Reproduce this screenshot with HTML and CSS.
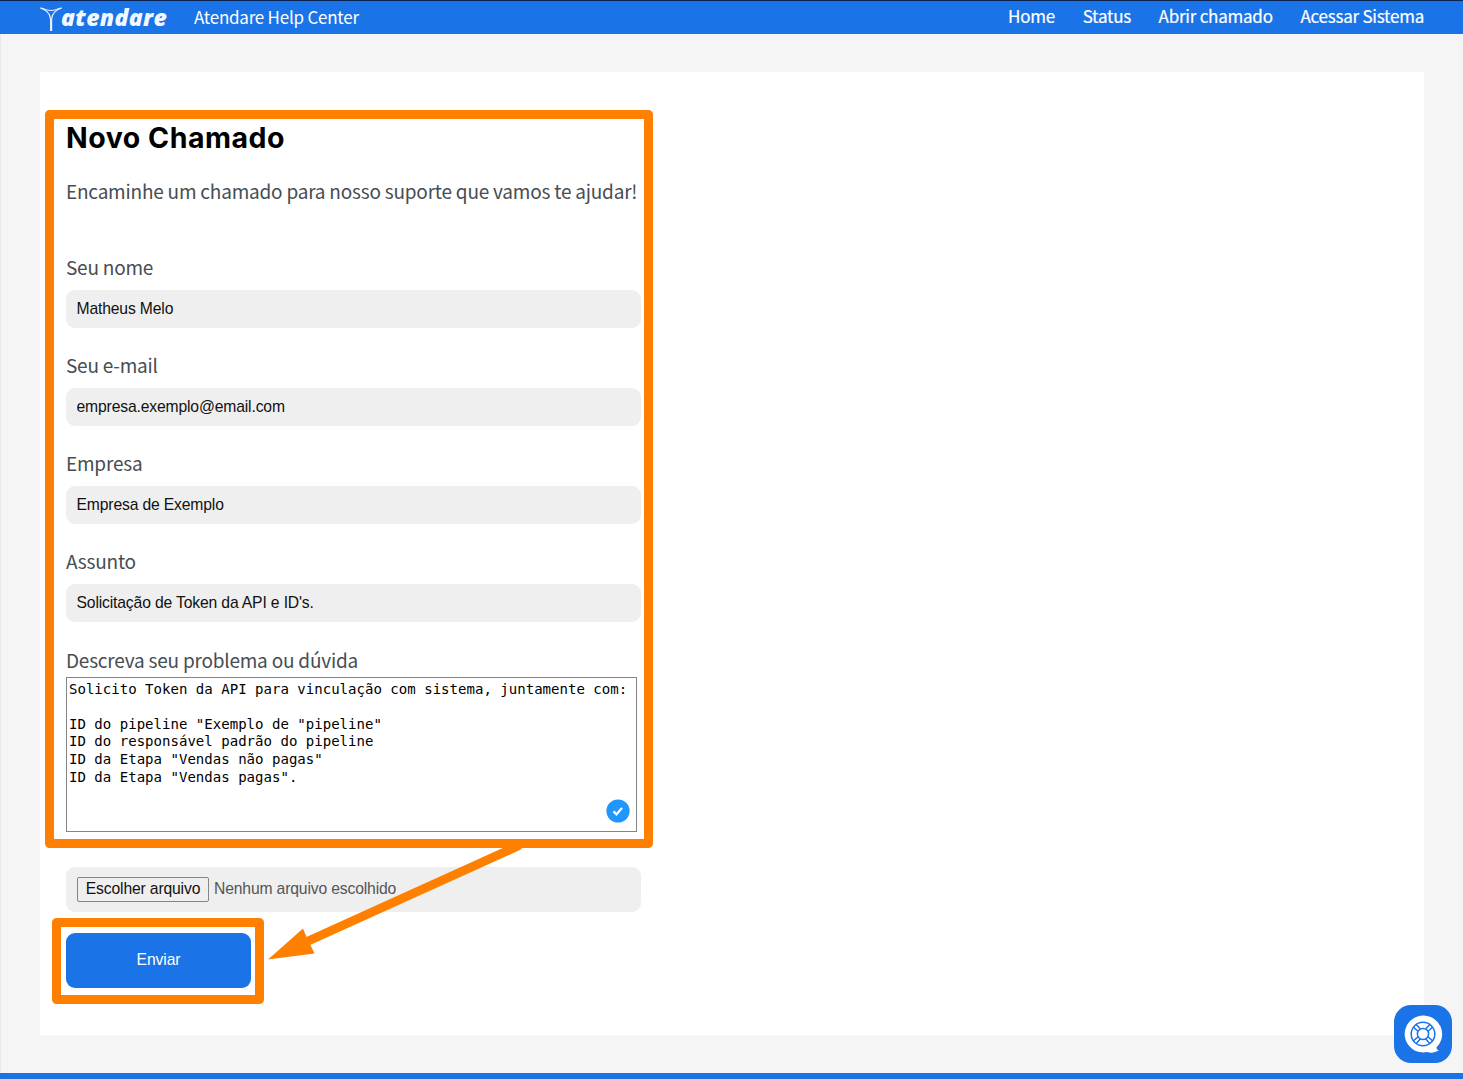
FILE: index.html
```html
<!DOCTYPE html>
<html lang="pt-BR">
<head>
<meta charset="utf-8">
<title>Novo Chamado - Atendare Help Center</title>
<link rel="stylesheet" href="styles.css">
</head>
<body>
<header class="topbar">
  <a class="brand">
    <svg class="brand-mark" width="22" height="25" viewBox="0 0 22 25" fill="none" stroke="#e4f0ff">
      <path d="M.5 1.2C5 2 10 6 10.600 12V24" stroke-width="1.200"/>
      <path d="M21.5 1.2C17 2 12 6 11.600 12V24" stroke-width="1.200"/>
      <path d="M.5 1c4 .3 5.500 2.500 10.500 2.500S17.500 1.300 21.500 1" stroke-width="1"/>
    </svg>
    <span class="brand-name">atendare</span>
  </a>
  <span class="site-name">Atendare Help Center</span>
  <nav class="menu">
    <a>Home</a><a>Status</a><a>Abrir chamado</a><a>Acessar Sistema</a>
  </nav>
</header>
<main class="panel">
  <form class="ticket">
    <h1 class="title">Novo Chamado</h1>
    <p class="intro">Encaminhe um chamado para nosso suporte que vamos te ajudar!</p>
    <div class="field"><label class="label">Seu nome</label><input class="input" value="Matheus Melo"></div>
    <div class="field"><label class="label">Seu e-mail</label><input class="input" value="empresa.exemplo@email.com"></div>
    <div class="field"><label class="label">Empresa</label><input class="input" value="Empresa de Exemplo"></div>
    <div class="field"><label class="label">Assunto</label><input class="input" value="Solicitação de Token da API e ID's."></div>
    <div class="message">
      <label class="label label-message">Descreva seu problema ou dúvida</label>
      <textarea class="textarea" spellcheck="false">Solicito Token da API para vinculação com sistema, juntamente com:

ID do pipeline "Exemplo de "pipeline"
ID do responsável padrão do pipeline
ID da Etapa "Vendas não pagas"
ID da Etapa "Vendas pagas".</textarea>
      <svg class="check" width="24" height="24" viewBox="0 0 24 24"><circle cx="12" cy="12" r="11.600" fill="#2196fd"/><path d="M7.500 12.400l3 3 5.500-6.500" fill="none" stroke="#fff" stroke-width="2.200"/></svg>
    </div>
    <div class="file"><button type="button" class="file-button">Escolher arquivo</button><span class="file-name">Nenhum arquivo escolhido</span></div>
    <button type="button" class="submit">Enviar</button>
  </form>
</main>
<footer class="footer"></footer>
<svg class="annotations" width="1463" height="1079" viewBox="0 0 1463 1079">
  <g fill="none" stroke="#ff8000" stroke-width="9" stroke-linejoin="round">
    <rect x="49.500" y="114.500" width="599" height="729"/>
    <rect x="56.500" y="922.500" width="203" height="77"/>
    <path d="M518 846L306 942" stroke-linecap="round"/>
  </g>
  <path d="M268 959.500L303 928.500L306.500 937L310.500 945L314.500 953.500Z" fill="#ff8000"/>
</svg>
<button type="button" class="help">
  <svg width="58" height="58" viewBox="0 0 58 58" fill="none">
    <path d="M29 10.500a18.500 18.500 0 1 0 4 36.600c4 1 8 .8 12-1.800-1.500-.3-2.500-1-2.500-3A18.500 18.500 0 0 0 29 10.500Z" fill="#fff"/>
    <g stroke="#1b73e8" stroke-width="1.500">
      <circle cx="29" cy="29" r="11.800"/><circle cx="29" cy="29" r="5.600"/>
      <path d="M26.300 24l-4.300-4.700M24 26.300l-4.700-4.300M31.700 24l4.300-4.700M34 26.300l4.700-4.300M26.300 34l-4.300 4.700M24 31.700l-4.700 4.300M31.700 34l4.300 4.700M34 31.700l4.700 4.300"/>
    </g>
  </svg>
</button>
</body>
</html>
```
FILE: styles.css
```css
* { box-sizing: border-box; }
body {
  margin: 0;
  height: 1079px;
  display: flex;
  flex-direction: column;
  background: #f5f5f5;
  box-shadow: inset 1px 0 #e9e9e9;
  font-family: "Noto Sans CJK JP", "Noto Sans", sans-serif;
  color: #474d53;
  overflow: hidden;
}
.topbar {
  flex: none;
  height: 34px;
  display: flex;
  align-items: center;
  padding: 0 39px 0 40px;
  background: #1b73e8;
  border-top: 1px solid #0b2350;
  color: #fff;
}
.brand { display: flex; width: 154px; height: 25px; margin-top: 4px; }
.brand-mark { flex: none; }
.brand-name {
  font: italic 800 23px/21px "Open Sans", sans-serif;
  letter-spacing: 0.350px;
  margin-left: -1px;
  color: #f2f8ff;
}
.site-name { font-size: 17px; letter-spacing: -0.240px; line-height: 24px; padding-bottom: 2px; }
.menu {
  margin-left: auto;
  padding-bottom: 3px;
  display: flex;
  gap: 27.700px;
  font-size: 17px;
  letter-spacing: -0.240px;
  line-height: 24px;
  -webkit-text-stroke: 0.2px #fff;
  white-space: nowrap;
}
.panel {
  flex: none;
  height: 963px;
  margin: 38px 39px 0 40px;
  padding: 47px 0 0 26px;
  background: #fff;
}
.ticket { width: 575px; display: flex; flex-direction: column; align-items: flex-start; }
.title {
  margin: 0;
  font: 700 28.500px/38px Inter, sans-serif;
  letter-spacing: 0.520px;
  color: #000;
}
.intro { margin: 16px 0 0; height: 71.500px; font-size: 19px; letter-spacing: -0.210px; line-height: 36px; white-space: nowrap; }
.field { width: 100%; height: 98.300px; }
.label { display: block; height: 45px; font-size: 19px; letter-spacing: -0.210px; line-height: 43px; }
.input {
  display: block;
  width: 100%;
  height: 38px;
  border: 0;
  border-radius: 9px;
  padding: 0 10.500px;
  background: #efefef;
  font: 15.700px "Liberation Sans", Arial, sans-serif;
  letter-spacing: -0.150px;
  color: #111;
}
.message { position: relative; width: 571px; height: 194px; }
.label-message { height: 39px; }
.textarea {
  display: block;
  width: 571px;
  height: 155px;
  padding: 3px 2px;
  border: 1px solid #858585;
  border-radius: 0;
  resize: none;
  background: #fff;
  font: 14.050px/17.600px "DejaVu Sans Mono", monospace;
  color: #000;
  overflow: hidden;
}
.check { position: absolute; right: 7.500px; bottom: 9px; }
.file {
  width: 100%;
  height: 45px;
  margin-top: 35px;
  padding: 0 11px;
  display: flex;
  align-items: center;
  gap: 5px;
  border-radius: 9px;
  background: #efefef;
  font: 15.700px "Liberation Sans", Arial, sans-serif;
  letter-spacing: -0.150px;
  color: #555;
}
.file-button {
  height: 25px;
  width: 132px;
  padding: 0;
  border: 1px solid #858585;
  border-radius: 2px;
  background: #efefef;
  font: inherit;
  letter-spacing: inherit;
  color: #111;
}
.submit {
  width: 185px;
  height: 55px;
  margin-top: 21px;
  border: 0;
  border-radius: 9px;
  background: #1b73e8;
  font: 15.700px "Liberation Sans", Arial, sans-serif;
  letter-spacing: -0.100px;
  color: #fff;
}
.footer { flex: none; height: 6px; margin-top: auto; background: #1b73e8; }
.annotations { position: absolute; left: 0; top: 0; pointer-events: none; }
.help {
  position: absolute;
  left: 1394px;
  top: 1005px;
  width: 58px;
  height: 58px;
  padding: 0;
  border: 0;
  border-radius: 17px;
  background: #1b73e8;
}
.help svg { display: block; }
```
